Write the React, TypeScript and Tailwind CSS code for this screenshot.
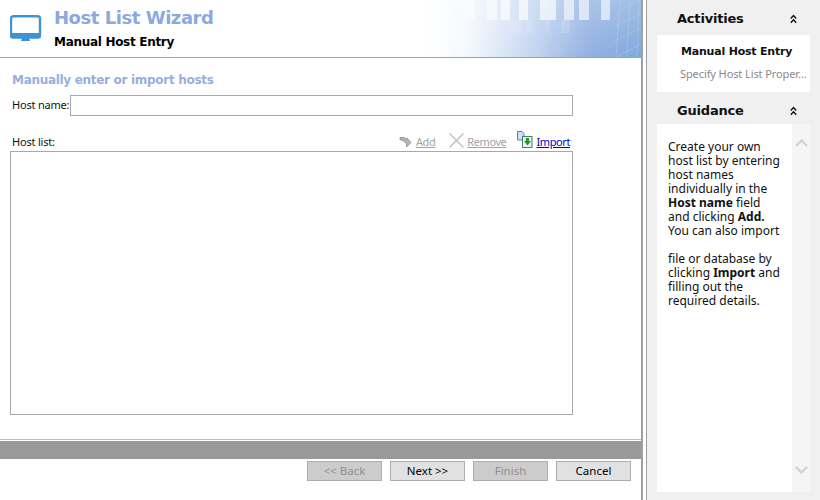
const font = 'font-["DejaVu_Sans",sans-serif]';
const body = 'font-["Noto_Sans",sans-serif]';

function HeaderArt() {
  const bars = [
    [37, 12, 0.4], [61, 10, 0.6], [75, 9, 0.65], [93, 9, 0.65], [114, 16, 0.65], [138, 10, 0.6], [153, 10, 0.6], [175, 9, 0.6],
  ];
  return (
    <svg width="215" height="57" viewBox="0 0 215 57" className="block shrink-0">
      <defs>
        <linearGradient id="sky" x1="0" x2="1" y1="0" y2="0">
          <stop offset="0" stopColor="#ffffff" />
          <stop offset="0.2" stopColor="#f4f8fd" />
          <stop offset="0.5" stopColor="#c3d5f0" />
          <stop offset="0.75" stopColor="#93b1e3" />
          <stop offset="1" stopColor="#7fa9dc" />
        </linearGradient>
        <linearGradient id="fade" x1="0" x2="0" y1="0" y2="1">
          <stop offset="0" stopColor="#ffffff" stopOpacity="0.25" />
          <stop offset="1" stopColor="#ffffff" stopOpacity="0" />
        </linearGradient>
      </defs>
      <rect width="215" height="57" fill="url(#sky)" />
      <rect width="215" height="57" fill="url(#fade)" />
      {bars.map(([x, w, o]) => (
        <rect key={x} x={x} y="0" width={w} height="20" fill="#ffffff" opacity={o} />
      ))}
      <rect x="82" y="20" width="14" height="13" fill="#ffffff" opacity="0.12" />
      <rect x="99" y="20" width="7" height="13" fill="#ffffff" opacity="0.12" />
      <rect x="119" y="20" width="5" height="13" fill="#ffffff" opacity="0.12" />
      <rect x="135" y="20" width="9" height="13" fill="#ffffff" opacity="0.15" />
      <path d="M190 57 L215 44 M187 42 L215 28 M190 26 L215 14 M193 10 L215 0 M194 0 L190 57 M204 0 L201 57 M213 0 L211 57" stroke="#c6d8f2" strokeWidth="0.8" opacity="0.45" fill="none" />
    </svg>
  );
}

function Collapse() {
  return (
    <svg width="7" height="10" viewBox="0 0 7 10" className="block">
      <path d="M0.8 4.5 L3.5 1.5 L6.2 4.5 M0.8 8.8 L3.5 5.8 L6.2 8.8" stroke="#111" strokeWidth="1.4" fill="none" />
    </svg>
  );
}

function WizButton({ label, disabled }: { label: string; disabled?: boolean }) {
  return (
    <button
      className={
        `h-5 w-[75px] border border-[#adadad] text-[11.5px] ${body} ` +
        (disabled ? 'bg-[#cccccc] text-[#8f8f8f]' : 'bg-[#e1e1e1] text-black')
      }
    >
      {label}
    </button>
  );
}

export default function App() {
  return (
    <div className={`flex h-[500px] w-[820px] overflow-hidden bg-white text-[11px] text-[#111] ${font}`}>
      <div className="flex w-[641px] shrink-0 flex-col">
        <header className="flex h-[58px] shrink-0 border-b border-[#a0a0a0]">
          <svg width="32" height="28" viewBox="0 0 32 28" className="ml-[10px] mt-[15px] block shrink-0">
            <rect x="1" y="1.2" width="29" height="21" rx="2.5" fill="#ffffff" stroke="#3c94d6" strokeWidth="2.4" />
            <rect x="0" y="18" width="31" height="5.5" rx="2" fill="#3c94d6" />
            <path d="M12 23 H19 L20 26 H11 Z" fill="#3c94d6" />
          </svg>
          <div className="ml-[12px] flex-1">
            <div className="mt-[4px] text-[18px] font-bold leading-[28px] tracking-[-0.45px] text-[#8ba9dd]">Host List Wizard</div>
            <div className="mt-[2px] text-[12px] font-bold leading-[16px] tracking-[-0.3px] text-black">Manual Host Entry</div>
          </div>
          <HeaderArt />
        </header>

        <main className="flex-1 pl-[10px]">
          <h1 className="ml-[2px] mt-[14px] text-[12px] font-bold leading-[17px] tracking-[-0.3px] text-[#94b0e0]">Manually enter or import hosts</h1>
          <div className="mt-[6px] flex h-[21px] w-[563px] items-center">
            <label className={`ml-[2px] w-[58px] whitespace-nowrap text-[11px] tracking-[-0.2px] ${body}`}>Host name:</label>
            <input className="h-[21px] flex-1 border border-[#a9a9a9] bg-white" />
          </div>
          <div className={`mt-[13px] flex h-[22px] w-[563px] items-end pb-[1px] text-[11px] ${body}`}>
            <span className="ml-[2px] tracking-[-0.2px]">Host list:</span>
            <div className="ml-auto flex items-end pr-[3px] tracking-[-0.4px]">
              <svg width="13" height="13" viewBox="0 0 13 13" className="mb-[2px] mr-[4px]">
                <path d="M1 2.5 H5.5 L6.5 4 L8 3 L12 7.5 L7.5 12 L7.5 9 L5 6 L1 4.5 Z" fill="#b4b4b4" stroke="#8a8a8a" strokeWidth="0.8" />
              </svg>
              <span className="text-[#a3a3a3] underline">Add</span>
              <svg width="17" height="17" viewBox="0 0 17 17" className="mb-[1px] ml-[13px] mr-[2px]">
                <path d="M1.5 1.5 L15.5 15.5 M15.5 1.5 L1.5 15.5" stroke="#c4c4c4" strokeWidth="1.6" />
              </svg>
              <span className="text-[#a3a3a3] underline">Remove</span>
              <svg width="16" height="17" viewBox="0 0 16 17" className="mb-[2px] ml-[11px] mr-[3px]">
                <path d="M0.5 0.5 H5 L7 2.5 V9 H0.5 Z" fill="#cfe0f5" stroke="#5b7fb0" />
                <rect x="5.5" y="5.5" width="9.5" height="11" fill="#e9f3ea" stroke="#4d7a6b" />
                <path d="M9 7 H12 V10 H14 L10.5 14.5 L7 10 H9 Z" fill="#1f9a2c" />
              </svg>
              <span className="text-[#0000cc] underline">Import</span>
            </div>
          </div>
          <div className="h-[264px] w-[563px] border border-[#a9a9a9] bg-white" />
        </main>

        <div className="h-[2px] shrink-0 border-t border-[#bdbdbd]" />
        <div className="h-[18px] shrink-0 bg-[#999999]" />
        <footer className="flex h-[41px] shrink-0 gap-[8px] pl-[307px] pt-[2px]">
          <WizButton label="<< Back" disabled />
          <WizButton label="Next >>" />
          <WizButton label="Finish" disabled />
          <WizButton label="Cancel" />
        </footer>
      </div>

      <div className="w-[2px] shrink-0 bg-[#a0a0a0]" />
      <div className="w-[3px] shrink-0 bg-white" />
      <div className="w-px shrink-0 bg-[#a0a0a0]" />

      <aside className="flex min-w-0 flex-1 flex-col bg-[#f0f0f0] pl-[10px] pr-[10px]">
        <div className="flex h-[35px] shrink-0 items-center justify-between pl-[20px] pr-[13px] pt-[2px]">
          <span className="text-[13px] font-bold tracking-[-0.2px]">Activities</span>
          <Collapse />
        </div>
        <div className="h-[57px] shrink-0 bg-white pl-[23px] pt-[10px]">
          <div className="ml-[1px] font-bold leading-[14px] tracking-[-0.2px]">Manual Host Entry</div>
          <div className={`mt-[8px] whitespace-nowrap text-[11px] leading-[14px] tracking-[-0.1px] text-[#8a8a8a] ${body}`}>Specify Host List Proper…</div>
        </div>
        <div className="flex h-[32px] shrink-0 items-center justify-between pl-[20px] pr-[13px] pt-[6px]">
          <span className="text-[13px] font-bold tracking-[-0.2px]">Guidance</span>
          <Collapse />
        </div>
        <div className="flex h-[368px] shrink-0 bg-white">
          <div className={`w-[135px] shrink-0 pl-[11px] pt-[16px] text-[12px] leading-[14px] ${body}`}>
            <p>Create your own<br />host list by entering<br />host names<br />individually in the<br /><b>Host name</b> field<br />and clicking <b>Add.</b><br />You can also import<br /><br />file or database by<br />clicking <b>Import</b> and<br />filling out the<br />required details.</p>
          </div>
          <div className="flex flex-1 flex-col items-center justify-between bg-[#f5f5f5] pb-[18px] pt-[15px]">
            <svg width="13" height="8" viewBox="0 0 13 8"><path d="M1 7 L6.5 1.5 L12 7" stroke="#d2d2d2" strokeWidth="2.4" fill="none" /></svg>
            <svg width="13" height="8" viewBox="0 0 13 8"><path d="M1 1 L6.5 6.5 L12 1" stroke="#d2d2d2" strokeWidth="2.4" fill="none" /></svg>
          </div>
        </div>
      </aside>
    </div>
  );
}
